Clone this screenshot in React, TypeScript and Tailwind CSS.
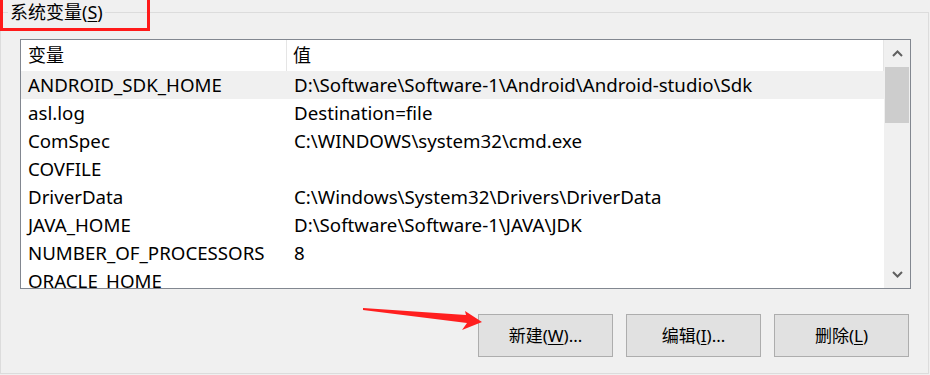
import React from 'react';

interface EnvVar {
  name: string;
  value: string;
}

const vars: EnvVar[] = [
  { name: 'ANDROID_SDK_HOME', value: 'D:\\Software\\Software-1\\Android\\Android-studio\\Sdk' },
  { name: 'asl.log', value: 'Destination=file' },
  { name: 'ComSpec', value: 'C:\\WINDOWS\\system32\\cmd.exe' },
  { name: 'COVFILE', value: '' },
  { name: 'DriverData', value: 'C:\\Windows\\System32\\Drivers\\DriverData' },
  { name: 'JAVA_HOME', value: 'D:\\Software\\Software-1\\JAVA\\JDK' },
  { name: 'NUMBER_OF_PROCESSORS', value: '8' },
  { name: 'ORACLE_HOME', value: '' },
];

function Button({ label, mnemonic, suffix }: { label: string; mnemonic: string; suffix: string }) {
  return (
    <button className="w-[135px] h-[43px] bg-[#e1e1e1] border border-[#adadad] text-[17px] text-black flex items-center justify-center">
      {label}(<span className="underline underline-offset-2">{mnemonic}</span>){suffix}
    </button>
  );
}

export default function App() {
  return (
    <div
      className="relative w-[930px] h-[375px] bg-[#f0f0f0] overflow-hidden pt-[12px]"
      style={{ fontFamily: '"Noto Sans", "Noto Sans CJK SC", sans-serif' }}
    >
      {/* group box */}
      <div className="w-[929px] h-[362px] border border-[#dcdcdc] flex flex-col">
        <div className="-mt-[12px] ml-[7px] self-start bg-[#f0f0f0] px-[2px] text-[18px] leading-[22px] text-black">
          系统变量(<span className="underline underline-offset-2">S</span>)
        </div>

        {/* list */}
        <div className="ml-[19px] mt-[16px] w-[891px] h-[250px] border border-[#828790] bg-white flex text-[18.7px] text-black">
          <div className="flex-1 flex flex-col overflow-hidden">
            <div className="h-[31px] shrink-0 flex border-r border-[#e5e5e5] text-[18px]">
              <div className="w-[266px] pl-[7px] flex items-center border-r border-[#e5e5e5]">变量</div>
              <div className="flex-1 pl-[6px] flex items-center">值</div>
            </div>
            {vars.map((v, i) => (
              <div
                key={v.name}
                className={`h-[28px] shrink-0 flex ${i === 0 ? 'bg-[#f0f0f0]' : ''}`}
              >
                <div className="w-[266px] pl-[7px] flex items-center whitespace-nowrap">{v.name}</div>
                <div className="flex-1 pl-[7px] flex items-center whitespace-nowrap">{v.value}</div>
              </div>
            ))}
          </div>

          {/* scrollbar */}
          <div className="w-[26px] shrink-0 bg-[#f0f0f0] flex flex-col">
            <div className="h-[27px] flex items-center justify-center">
              <svg width="11" height="7" viewBox="0 0 11 7">
                <path d="M1 6 L5.5 1.5 L10 6" stroke="#606060" strokeWidth="2" fill="none" />
              </svg>
            </div>
            <div className="mx-[1px] h-[56px] bg-[#cdcdcd]" />
            <div className="flex-1" />
            <div className="h-[27px] flex items-center justify-center">
              <svg width="11" height="7" viewBox="0 0 11 7">
                <path d="M1 1 L5.5 5.5 L10 1" stroke="#606060" strokeWidth="2" fill="none" />
              </svg>
            </div>
          </div>
        </div>

        {/* buttons */}
        <div className="mt-[25px] ml-[477px] flex gap-[13px]">
          <Button label="新建" mnemonic="W" suffix="..." />
          <Button label="编辑" mnemonic="I" suffix="..." />
          <Button label="删除" mnemonic="L" suffix="" />
        </div>
      </div>

      {/* red highlight box around title */}
      <div className="absolute left-0 top-[-3px] w-[150px] h-[34px] border-[3px] border-[#ff1a1a] pointer-events-none" />

      {/* red arrow */}
      <svg className="absolute left-[360px] top-[300px]" width="130" height="40" viewBox="0 0 130 40">
        <polygon points="3,8 106,15 105,11 122,22 102,30 107,23 3,10" fill="#ff1f1f" />
      </svg>
    </div>
  );
}
